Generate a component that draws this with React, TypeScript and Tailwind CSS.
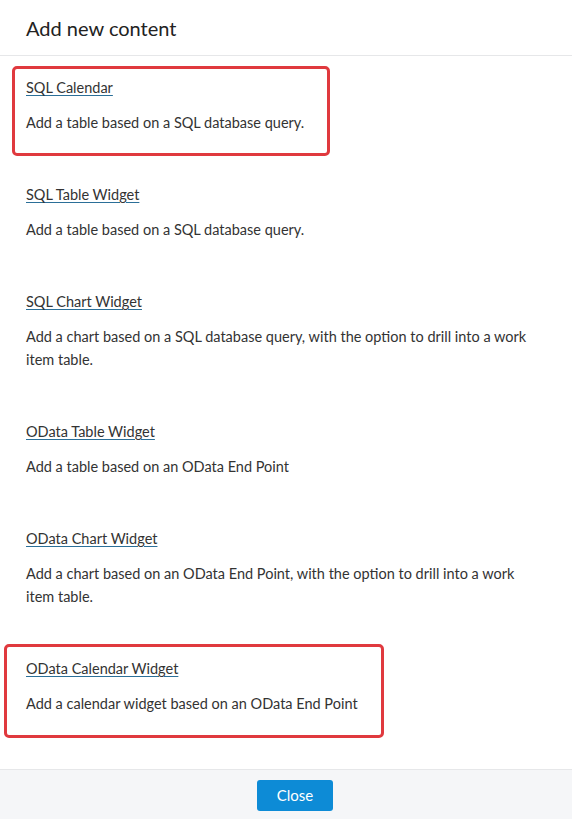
const items = [
  { title: "SQL Calendar", desc: "Add a table based on a SQL database query." },
  { title: "SQL Table Widget", desc: "Add a table based on a SQL database query." },
  {
    title: "SQL Chart Widget",
    desc: "Add a chart based on a SQL database query, with the option to drill into a work item table.",
  },
  { title: "OData Table Widget", desc: "Add a table based on an OData End Point" },
  {
    title: "OData Chart Widget",
    desc: "Add a chart based on an OData End Point, with the option to drill into a work item table.",
  },
  { title: "OData Calendar Widget", desc: "Add a calendar widget based on an OData End Point" },
];

export default function App() {
  return (
    <div className="w-[572px] h-[819px] bg-white flex flex-col text-[#333] font-['Lato',sans-serif] overflow-hidden">
      {/* header */}
      <div className="h-[56px] border-b border-[#e6e7e9] flex items-center px-[26px]">
        <h1 className="text-[20px] text-[#222] leading-none">Add new content</h1>
      </div>

      {/* list */}
      <div className="flex-1 pt-[20px]">
        {items.map((item, i) => (
          <div key={item.title} className="relative pl-[26px] pr-[30px] pb-[49px] text-[14.5px] leading-[23px]">
            <a href="#" className="underline decoration-[#2b6f98] underline-offset-[2px] text-[#333]">
              {item.title}
            </a>
            <p className="mt-[12px]">{item.desc}</p>
            {i === 0 && (
              <div className="absolute left-[12px] top-[-10px] w-[318px] h-[90px] border-[3px] border-[#e0393e] rounded-[5px]" />
            )}
            {i === items.length - 1 && (
              <div className="absolute left-[4px] top-[-13px] w-[380px] h-[94px] border-[3px] border-[#e0393e] rounded-[5px]" />
            )}
          </div>
        ))}
      </div>

      {/* footer */}
      <div className="h-[50px] border-t border-[#e6e7e9] bg-[#f5f6f8] flex justify-center pl-[18px] pt-[10px]">
        <button className="w-[76px] h-[31px] rounded-[3px] bg-[#0d8bd6] text-white text-[15px]">Close</button>
      </div>
    </div>
  );
}
